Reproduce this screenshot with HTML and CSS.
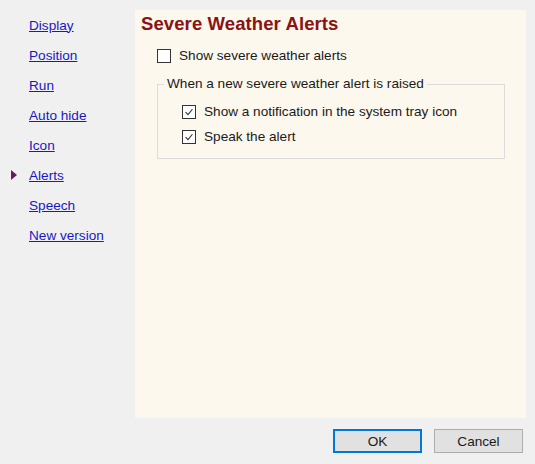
FILE: index.html
```html
<!DOCTYPE html>
<html>
<head>
<meta charset="utf-8">
<link rel="stylesheet" href="styles.css">
</head>
<body>
<div class="window">
  <div class="main">
    <nav class="sidebar">
      <div class="nav-item"><a href="#">Display</a></div>
      <div class="nav-item"><a href="#">Position</a></div>
      <div class="nav-item"><a href="#">Run</a></div>
      <div class="nav-item"><a href="#">Auto hide</a></div>
      <div class="nav-item"><a href="#">Icon</a></div>
      <div class="nav-item active"><span class="arrow"></span><a href="#">Alerts</a></div>
      <div class="nav-item"><a href="#">Speech</a></div>
      <div class="nav-item"><a href="#">New version</a></div>
    </nav>
    <section class="panel">
      <h1 class="title">Severe Weather Alerts</h1>
      <label class="check-row top-check"><span class="box"></span>Show severe weather alerts</label>
      <div class="group">
        <div class="legend">When a new severe weather alert is raised</div>
        <label class="check-row"><span class="box checked"><svg viewBox="0 0 14 14" width="14" height="14"><path d="M3 7.2 L5.8 10 L11 3.8" fill="none" stroke="#333" stroke-width="1.3"/></svg></span>Show a notification in the system tray icon</label>
        <label class="check-row"><span class="box checked"><svg viewBox="0 0 14 14" width="14" height="14"><path d="M3 7.2 L5.8 10 L11 3.8" fill="none" stroke="#333" stroke-width="1.3"/></svg></span>Speak the alert</label>
      </div>
    </section>
  </div>
  <div class="footer">
    <button class="btn btn-default">OK</button>
    <button class="btn">Cancel</button>
  </div>
</div>
</body>
</html>
```

FILE: styles.css
```css
html, body {
  margin: 0;
  padding: 0;
  background: #f0f0f0;
}
.window {
  width: 535px;
  height: 464px;
  display: flex;
  flex-direction: column;
  font-family: "Liberation Sans", Arial, sans-serif;
  font-size: 13.6px;
  color: #1a1a1a;
}
.main {
  display: flex;
  height: 419px;
}
.sidebar {
  width: 135px;
  padding-top: 10px;
  box-sizing: border-box;
}
.nav-item {
  height: 30px;
  display: flex;
  align-items: center;
  padding-left: 29px;
  position: relative;
}
.nav-item a {
  color: #1818c8;
  text-decoration: underline;
}
.arrow {
  position: absolute;
  left: 11px;
  top: 10px;
  width: 0;
  height: 0;
  border-top: 5px solid transparent;
  border-bottom: 5px solid transparent;
  border-left: 6px solid #6a1868;
}
.panel {
  margin-top: 10px;
  width: 391px;
  height: 408px;
  background: #fdf8ee;
  box-sizing: border-box;
  padding: 4px 21px 0 6px;
}
.title {
  margin: 0;
  font-size: 18.5px;
  font-weight: bold;
  color: #8a1212;
  line-height: 20px;
  letter-spacing: 0.1px;
}
.check-row {
  display: flex;
  align-items: center;
  height: 25px;
}
.top-check {
  margin-top: 9px;
  padding-left: 16px;
}
.box {
  width: 12px;
  height: 12px;
  border: 1px solid #333;
  background: #fff;
  margin-right: 8px;
  display: flex;
  align-items: center;
  justify-content: center;
}
.box svg {
  display: block;
}
.group {
  margin: 16px 0 0 16px;
  border: 1px solid #dcdcdc;
  padding: 8px 0 12px 24px;
  position: relative;
  height: 75px;
  box-sizing: border-box;
}
.legend {
  position: absolute;
  top: -9px;
  left: 6px;
  padding: 0 3px;
  background: #fdf8ee;
  line-height: 16px;
}
.group .check-row:first-of-type {
  margin-top: 6px;
}
.footer {
  display: flex;
  justify-content: flex-end;
  gap: 12px;
  padding: 10px 12px 0 0;
}
.btn {
  width: 89px;
  height: 24px;
  background: #e1e1e1;
  border: 1px solid #adadad;
  font-family: "Liberation Sans", Arial, sans-serif;
  font-size: 13.6px;
  color: #1a1a1a;
  padding: 0;
}
.btn-default {
  border: 2px solid #0078d7;
}
```
